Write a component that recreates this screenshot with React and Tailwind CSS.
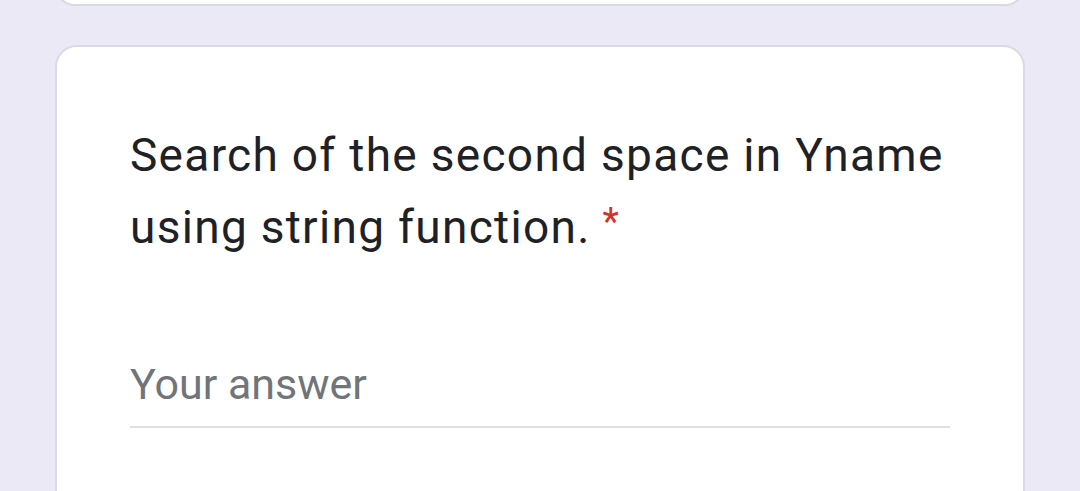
export default function App() {
  return (
    <div className="w-[1080px] h-[491px] overflow-hidden bg-[#ebe9f6] px-[55px]" style={{ fontFamily: 'Roboto, "Liberation Sans", sans-serif' }}>
      <div className="-mt-[34px] h-[40px] rounded-[22px] border-2 border-[#dadae2] bg-white" />
      <div className="mt-[39px] h-[500px] rounded-[22px] border-2 border-[#dadae2] bg-white px-[73px] pt-[72px]">
        <div className="text-[46px] leading-[72px] tracking-[1.3px] text-[#202124]">
          Search of the second space in Yname using string function.
          <span className="ml-[12px] relative -top-[8px] text-[38px] leading-none text-[#d93025]">*</span>
        </div>
        <div className="mt-[97px] text-[43px] leading-[48px] text-[#70757a]">Your answer</div>
        <div className="mt-[18px] h-[2px] bg-[#e0e0e0]" />
      </div>
    </div>
  );
}
